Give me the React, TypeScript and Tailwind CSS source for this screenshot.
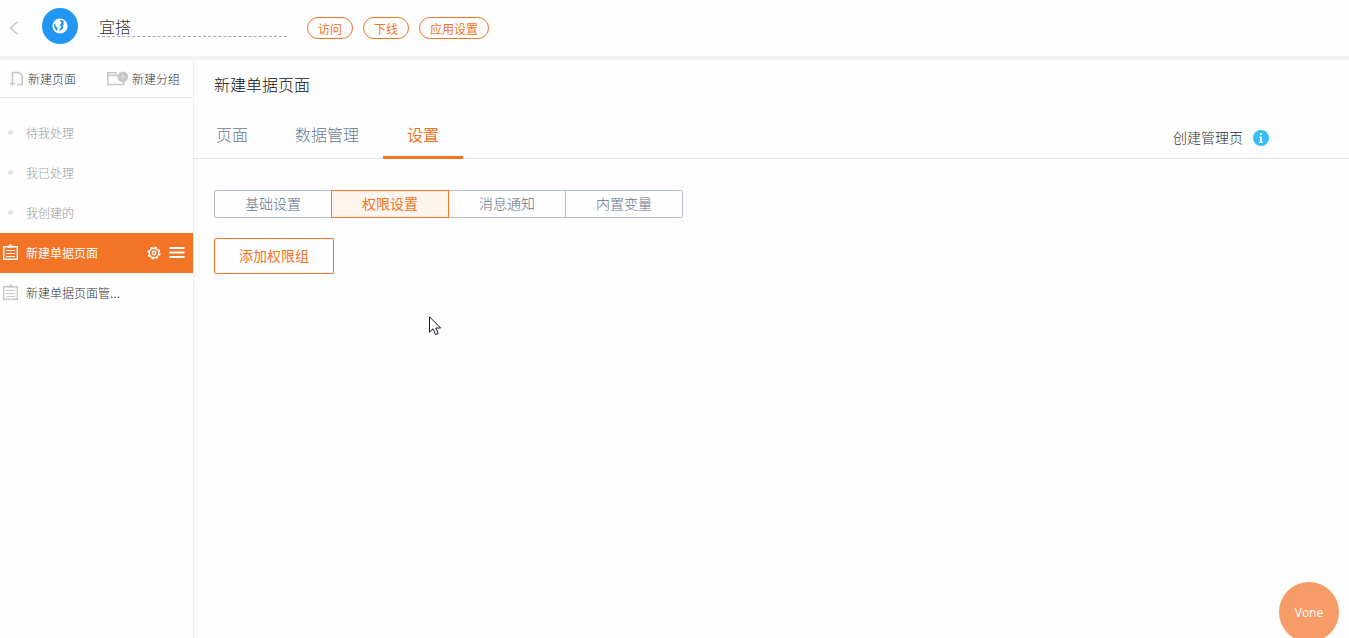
import { useState } from "react";

const font = "font-['Liberation_Sans','Noto_Sans_CJK_SC',sans-serif]";

function GlobeIcon() {
  return (
    <svg viewBox="0 0 16 16" className="size-4" aria-hidden="true">
      <circle cx="8" cy="8" r="7.6" fill="#fff" />
      <path
        d="M2 6 3.2 5.4 3.6 8 5.2 9.6 5.6 11.2 5 12.8 3.6 11.8 2.4 9.6Z M8.4 2 10.2 2.2 12 3.4 11.2 4.8 12 6 11 7.6 11.2 10 9.6 11.8 7.4 13.2 7.2 12 8.8 10 9 8.2 7.6 7.4 8.8 6 9.6 4.6 8.2 3.6Z"
        fill="#2196f3"
      />
    </svg>
  );
}

function NewPageIcon() {
  return (
    <svg viewBox="0 0 14 16" className="h-4 w-3.5" fill="none" stroke="#c6c6c6" aria-hidden="true">
      <path d="M2.5 10V1.5h6.3L12.3 5V13.5H7" strokeWidth="1.5" />
      <path d="M0 12.5h5M2.5 10v5" strokeWidth="1.5" />
    </svg>
  );
}

function NewGroupIcon() {
  return (
    <svg viewBox="0 0 22 16" className="h-4 w-[22px]" fill="none" stroke="#c6c6c6" aria-hidden="true">
      <path d="M11 4.5H9V1.8H0.8v11.7h15.9V11M0.8 4.5h8.6" strokeWidth="1.5" />
      <circle cx="15.8" cy="5.8" r="5.4" fill="#c6c6c6" stroke="none" />
      <path d="M12.8 5.8h6M15.8 2.8v6" stroke="#dedede" />
    </svg>
  );
}

function ClipboardIcon() {
  return (
    <svg viewBox="0 0 15 16" className="mb-0.5 h-4 w-[15px] shrink-0" fill="none" stroke="currentColor" aria-hidden="true">
      <path d="M0.7 2.7h13.6v12.6H0.7Z" strokeWidth="1.4" />
      <path d="M4.5 3.5V1.8H6a1.5 1.5 0 0 1 3 0h1.5v1.7Z" fill="currentColor" stroke="none" />
      <path d="M3 6.5h9M3 9.5h9M3 12.5h9" />
    </svg>
  );
}

function GearIcon() {
  return (
    <svg viewBox="0 0 14 14" className="size-3.5" fill="none" stroke="currentColor" aria-hidden="true">
      <circle cx="7" cy="7" r="4.7" strokeWidth="1.4" />
      <circle cx="7" cy="7" r="5.8" strokeWidth="1.6" strokeDasharray="2.28 2.275" />
      <circle cx="7" cy="7" r="1.7" strokeWidth="1.4" />
    </svg>
  );
}

function MenuIcon() {
  return (
    <svg viewBox="0 0 16 12" className="h-3 w-4" stroke="currentColor" strokeWidth="2" aria-hidden="true">
      <path d="M0.5 2h15M0.5 6.5h15M0.5 11h15" />
    </svg>
  );
}

function InfoIcon() {
  return (
    <svg viewBox="0 0 16 16" className="size-4" aria-hidden="true">
      <circle cx="8" cy="8" r="8" fill="#38bdfb" />
      <path d="M7 3h2v2H7ZM6 6.5h3V12h1v1H6v-1h1V7.5H6Z" fill="#fff" />
    </svg>
  );
}

function Pointer() {
  return (
    <svg viewBox="0 0 13 20" className="pointer-events-none absolute top-[316px] left-[429px] h-5 w-[13px]" aria-hidden="true">
      <path
        d="M0.5 0.8V16.2L4 12.8 6.6 18.6 9.2 17.4 6.8 12H11.6Z"
        fill="#fff"
        stroke="#15152a"
        strokeWidth="1"
      />
    </svg>
  );
}

const tasks = ["待我处理", "我已处理", "我创建的"];
const actions = ["访问", "下线", "应用设置"];
const tabs = ["页面", "数据管理", "设置"];
const sections = ["基础设置", "权限设置", "消息通知", "内置变量"];

export default function App() {
  const [tab, setTab] = useState("设置");
  const [section, setSection] = useState("权限设置");

  return (
    <div className={`relative flex h-screen flex-col overflow-hidden bg-[#fefefe] font-light text-[#333] ${font}`}>
      <header className="flex h-15 shrink-0 items-center border-b-4 border-[#f2f2f2]">
        <button aria-label="返回" className="ml-2 flex size-3 items-center justify-center">
          <svg viewBox="0 0 12 14" className="h-3.5 w-3 shrink-0" fill="none" stroke="#c4c4c4" strokeWidth="1.5">
            <path d="M9.5 0.8 2.5 7l7 6.2" />
          </svg>
        </button>
        <div className="mb-1 ml-[22px] flex size-9 items-center justify-center rounded-full bg-[#2196f3]">
          <GlobeIcon />
        </div>
        <input
          aria-label="应用名称"
          defaultValue="宜搭"
          className="mb-0.5 ml-[19px] h-5 w-[190px] border-b border-dashed border-[#aaa] bg-transparent px-0.5 pt-0.5 text-base leading-5 outline-none"
        />
        <div className="ml-5 flex gap-2.5">
          {actions.map((label) => (
            <button key={label} className="h-[22px] rounded-full border border-[#f37327] px-2.5 pt-0.5 text-xs leading-5 font-normal text-[#f37327]">
              {label}
            </button>
          ))}
        </div>
      </header>

      <div className="flex min-h-0 grow">
        <aside className="w-[194px] shrink-0 border-r border-[#f0f0f0] text-xs">
          <div className="flex h-[38px] items-center justify-between border-b border-[#e6e6e6] pr-[13px] pl-2.5">
            <button className="flex items-center gap-1">
              <NewPageIcon />
              <span className="pt-0.5">新建页面</span>
            </button>
            <button className="flex items-center gap-[3px]">
              <NewGroupIcon />
              <span className="pt-0.5">新建分组</span>
            </button>
          </div>
          <nav className="mt-[15px] flex flex-col">
            {tasks.map((label) => (
              <a key={label} href="#" className="flex h-10 items-center gap-[13px] pl-2 text-[#999]">
                <span className="mb-0.5 size-[5px] rounded-full bg-[#e4e4ea]" />
                <span className="pt-0.5">{label}</span>
              </a>
            ))}
            <div className="flex h-10 items-center bg-[#f37327] pr-2 pl-[3px] text-white">
              <a href="#" className="flex grow items-center gap-2 font-normal">
                <ClipboardIcon />
                <span className="pt-0.5">新建单据页面</span>
              </a>
              <button aria-label="页面设置">
                <GearIcon />
              </button>
              <button aria-label="更多" className="mb-0.5 ml-2">
                <MenuIcon />
              </button>
            </div>
            <a href="#" className="flex h-10 items-center gap-2 pl-[3px]">
              <span className="text-[#c8c8cc]">
                <ClipboardIcon />
              </span>
              <span className="pt-0.5">新建单据页面管...</span>
            </a>
          </nav>
        </aside>

        <main className="min-w-0 grow">
          <h1 className="px-5 pt-3.5 text-base leading-6 text-[#111]">新建单据页面</h1>
          <div className="mt-4 flex h-[45px] items-end justify-between border-b border-[#e6e6e6] pr-20">
            <div role="tablist" className="-mb-px flex text-base leading-6">
              {tabs.map((label) => (
                <button
                  key={label}
                  role="tab"
                  aria-selected={tab === label}
                  onClick={() => setTab(label)}
                  className={`h-[45px] border-b-3 px-6 pt-0.5 first:pr-[23px] first:pl-[22px] ${
                    tab === label ? "border-[#f37327] font-normal text-[#f37327]" : "border-transparent text-[#6b7b92]"
                  }`}
                >
                  {label}
                </button>
              ))}
            </div>
            <div className="flex items-center gap-2.5 pb-2.5 text-sm leading-5">
              <a href="#">创建管理页</a>
              <InfoIcon />
            </div>
          </div>

          <div className="flex flex-col items-start gap-5 px-5 pt-[31px]">
            <div className="flex text-sm leading-5">
              {sections.map((label) => (
                <button
                  key={label}
                  aria-pressed={section === label}
                  onClick={() => setSection(label)}
                  className={`-ml-px h-7 w-[118px] border first:ml-0 first:rounded-l-xs last:rounded-r-xs ${
                    section === label
                      ? "z-10 border-[#f37327] bg-[#fff5ef] font-normal text-[#f37327]"
                      : "border-[#b4bfcc] text-[#62738c]"
                  }`}
                >
                  {label}
                </button>
              ))}
            </div>
            <button className="h-9 w-[120px] rounded-xs border border-[#f37327] text-sm font-normal text-[#f37327]">
              添加权限组
            </button>
          </div>
        </main>
      </div>

      <Pointer />
      <button className="absolute right-2.5 -bottom-1 size-15 rounded-full bg-[#f79c67] pt-0.5 font-['Open_Sans',sans-serif] text-xs font-medium text-white shadow-xs">
        Vone
      </button>
    </div>
  );
}
